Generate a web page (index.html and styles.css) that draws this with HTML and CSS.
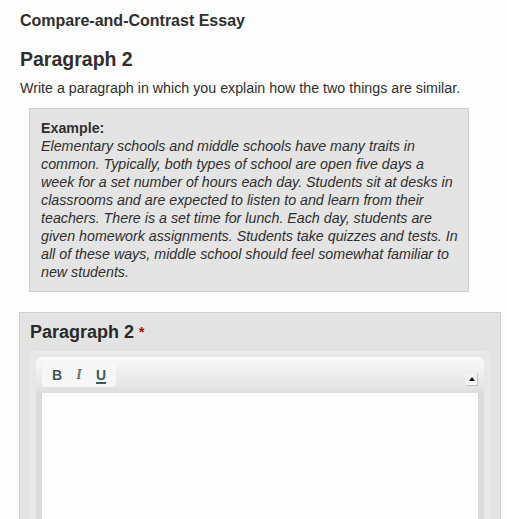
FILE: index.html
```html
<!DOCTYPE html>
<html lang="en">
<head>
  <meta charset="UTF-8">
  <title>Compare-and-Contrast Essay</title>
  <link rel="stylesheet" href="styles.css">
</head>
<body>
  <div class="page">
    <h1 class="essay-title">Compare-and-Contrast Essay</h1>
    <h2 class="step-title">Paragraph 2</h2>
    <p class="step-intro">Write a paragraph in which you explain how the two things are similar.</p>

    <div class="example">
      <strong>Example:</strong>
      <em>Elementary schools and middle schools have many traits in common. Typically, both types of school are open five days a week for a set number of hours each day. Students sit at desks in classrooms and are expected to listen to and learn from their teachers. There is a set time for lunch. Each day, students are given homework assignments. Students take quizzes and tests. In all of these ways, middle school should feel somewhat familiar to new students.</em>
    </div>

    <div class="field">
      <label class="field-label">Paragraph 2 <span class="required">*</span></label>
      <div class="editor-wrap">
        <div class="editor">
          <div class="toolbar">
            <div class="btn-group">
              <span class="tb-btn tb-bold">B</span>
              <span class="tb-btn tb-italic">I</span>
              <span class="tb-btn tb-under">U</span>
            </div>
            <span class="collapse-btn"></span>
          </div>
          <div class="edit-area"></div>
        </div>
      </div>
    </div>
  </div>
</body>
</html>
```

FILE: styles.css
```css
body {
  margin: 0;
  background: #fdfdfd;
  color: #2f2f2f;
  font-family: "Liberation Sans", Arial, sans-serif;
  overflow: hidden;
}
.page {
  padding: 11px 6px 0 19px;
}
.essay-title {
  margin: 0 0 0 1px;
  font-size: 16px;
  line-height: 20px;
  font-weight: bold;
}
.step-title {
  margin: 17px 0 0 1px;
  font-size: 19.5px;
  line-height: 22px;
  font-weight: bold;
}
.step-intro {
  margin: 9px 0 0 1px;
  font-size: 14.25px;
  line-height: 18px;
}
.example {
  margin: 11px 0 0 10px;
  width: 417px;
  padding: 10px 10px 10px 11px;
  background: #e4e4e4;
  border: 1px solid #d0d0d0;
  font-size: 14.25px;
  line-height: 18px;
}
.example strong {
  display: block;
}
.field {
  margin-top: 20px;
  width: 460px;
  padding: 8px 10px 0;
  background: #e3e3e3;
  border: 1px solid #d3d3d3;
  border-bottom: none;
}
.field-label {
  display: block;
  font-size: 18px;
  line-height: 22px;
  font-weight: bold;
  color: #2a2a2a;
}
.required {
  color: #c00;
  font-size: 14px;
  vertical-align: top;
}
.editor-wrap {
  margin-top: 8px;
  padding: 5px 5px 0;
  background: #e8e8e8;
  border: 1px solid #ebebeb;
  border-bottom: none;
  border-radius: 6px 6px 0 0;
}
.editor {
  background: #dadada;
  border-radius: 6px 6px 0 0;
  padding: 0 6px;
}
.toolbar {
  margin: 0 -6px;
  height: 36px;
  padding: 0 6px;
  display: flex;
  align-items: flex-start;
  justify-content: space-between;
  background: linear-gradient(#f9f9f9, #e6e6e6 80%, #dcdcdc);
  border-radius: 6px 6px 0 0;
}
.btn-group {
  margin-top: 5px;
  display: flex;
  gap: 4px;
  padding: 0 6px;
  height: 25px;
  align-items: center;
  background: #f7f7f7;
  border-radius: 4px;
}
.tb-btn {
  width: 18px;
  text-align: center;
  font-size: 14px;
  font-weight: bold;
  color: #3d5a5a;
}
.tb-italic {
  font-style: italic;
  font-family: "Liberation Serif", serif;
  color: #6a7272;
}
.tb-under {
  text-decoration: underline;
  text-decoration-thickness: 2px;
  text-underline-offset: 2px;
}
.collapse-btn {
  margin-top: 16px;
  width: 11px;
  height: 12px;
  background: #f2f2f2;
  border: 1px solid #c4c4c4;
  border-width: 0 1px 1px 0;
  position: relative;
}
.collapse-btn::after {
  content: "";
  position: absolute;
  left: 3px;
  top: 4px;
  border-left: 3px solid transparent;
  border-right: 3px solid transparent;
  border-bottom: 4px solid #111;
}
.edit-area {
  background: #fdfdfd;
  height: 126px;
}
```
